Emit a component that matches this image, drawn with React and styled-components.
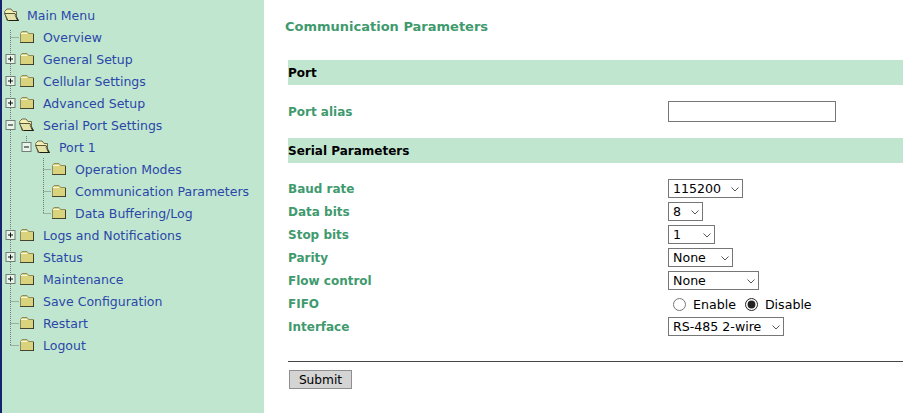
import React from 'react'
import styled, { createGlobalStyle } from 'styled-components'

const GlobalStyle = createGlobalStyle`
    html, body { margin: 0; padding: 0; background: #fff; }
    body { font-family: "DejaVu Sans", Verdana, sans-serif; font-size: 12.5px; }
`

const menu = [
    { label: 'Main Menu', depth: 0, open: true },
    { label: 'Overview', depth: 1 },
    { label: 'General Setup', depth: 1, toggle: 'plus' },
    { label: 'Cellular Settings', depth: 1, toggle: 'plus' },
    { label: 'Advanced Setup', depth: 1, toggle: 'plus' },
    { label: 'Serial Port Settings', depth: 1, toggle: 'minus', open: true },
    { label: 'Port 1', depth: 2, toggle: 'minus', open: true },
    { label: 'Operation Modes', depth: 3 },
    { label: 'Communication Parameters', depth: 3 },
    { label: 'Data Buffering/Log', depth: 3, lastChild: true },
    { label: 'Logs and Notifications', depth: 1, toggle: 'plus' },
    { label: 'Status', depth: 1, toggle: 'plus' },
    { label: 'Maintenance', depth: 1, toggle: 'plus' },
    { label: 'Save Configuration', depth: 1 },
    { label: 'Restart', depth: 1 },
    { label: 'Logout', depth: 1, lastChild: true },
]

const textX = [27, 43, 59, 75]
const folderX = [4, 19, 35, 51]

function Dotted({ x1, y1, x2, y2 }) {
    return <line x1={x1} y1={y1} x2={x2} y2={y2} stroke="#6f7f76" strokeWidth="1" strokeDasharray="1 1" />
}

function Folder({ x, open }) {
    if (open) {
        return (
            <g transform={`translate(${x} 4)`}>
                <path d="M0.5 3.5 L3 1 H7 L9 3.5 H12.5 V12.5 H3 Z" fill="#f4eeb0" stroke="#6b6b4a" />
                <path d="M0.5 5.5 H11 L14.5 12.5 H4 Z" fill="#e6e3a8" stroke="#57573c" />
                <path d="M10 6 L15 13 H5 L4.5 12 H13 Z" fill="#1d1d16" />
            </g>
        )
    }
    return (
        <g transform={`translate(${x} 5)`}>
            <path d="M1.5 2.5 L3 0.5 H8 L9.5 2.5 H14.5 V11.5 H1.5 Z" fill="#d9d47c" stroke="#8f8c62" />
            <path d="M2 2 H8 L9 3 H2 Z" fill="#fbf8d8" />
            <rect x="2" y="3" width="12" height="8" fill="#d8d37c" />
            <path d="M1 12 H15 V3 H14.2 V11.2 H1 Z" fill="#2d2d22" />
        </g>
    )
}

function Toggle({ x, kind }) {
    return (
        <g>
            <rect x={x - 4.5} y="6.5" width="9" height="9" fill="#e8f3ea" stroke="#6f7f76" />
            <line x1={x - 2.5} y1="11" x2={x + 2.5} y2="11" stroke="#111" />
            {kind === 'plus' && <line x1={x} y1="8.5" x2={x} y2="13.5" stroke="#111" />}
        </g>
    )
}

function TreeMark({ item }) {
    const { depth, toggle, open, lastChild, label } = item
    const width = textX[depth]
    const trunkEnd = label === 'Logout' ? 11 : 22
    const nested = depth === 3
    return (
        <TreeSvg width={width} height="22" viewBox={`0 0 ${width} 22`}>
            {depth > 0 && <Dotted x1={10.5} y1={label === 'Overview' ? 4 : 0} x2={10.5} y2={trunkEnd} />}
            {depth === 1 && !toggle && <Dotted x1={10.5} y1={11.5} x2={19} y2={11.5} />}
            {depth === 2 && <Dotted x1={26.5} y1={0} x2={26.5} y2={8} />}
            {nested && <Dotted x1={43.5} y1={0} x2={43.5} y2={lastChild ? 11.5 : 22} />}
            {nested && <Dotted x1={43.5} y1={11.5} x2={51} y2={11.5} />}
            {toggle && <Toggle x={depth === 1 ? 10.5 : 26.5} kind={toggle} />}
            <Folder x={folderX[depth]} open={open} />
        </TreeSvg>
    )
}

function Select({ width, value }) {
    return (
        <PickerBox $w={width}>
            <Picker defaultValue={value}><option>{value}</option></Picker>
            <Chevron width="8" height="5" viewBox="0 0 8 5"><path d="M0.5 0.5 L4 4 L7.5 0.5" fill="none" stroke="#555" /></Chevron>
        </PickerBox>
    )
}

function App() {
    return (
        <Page>
            <GlobalStyle />
            <Sidebar>
                {menu.map((item) => (
                    <MenuRow key={item.label}>
                        <TreeMark item={item} />
                        <MenuLink>{item.label}</MenuLink>
                    </MenuRow>
                ))}
            </Sidebar>
            <Main>
                <Title>Communication Parameters</Title>
                <SectionBar>Port</SectionBar>
                <AliasRow>
                    <FieldLabel>Port alias</FieldLabel>
                    <TextBox type="text" />
                </AliasRow>
                <SectionBar>Serial Parameters</SectionBar>
                <Fields>
                    <FieldRow>
                        <FieldLabel>Baud rate</FieldLabel>
                        <Select width={75} value="115200" />
                    </FieldRow>
                    <FieldRow>
                        <FieldLabel>Data bits</FieldLabel>
                        <Select width={35} value="8" />
                    </FieldRow>
                    <FieldRow>
                        <FieldLabel>Stop bits</FieldLabel>
                        <Select width={47} value="1" />
                    </FieldRow>
                    <FieldRow>
                        <FieldLabel>Parity</FieldLabel>
                        <Select width={65} value="None" />
                    </FieldRow>
                    <FieldRow>
                        <FieldLabel>Flow control</FieldLabel>
                        <Select width={91} value="None" />
                    </FieldRow>
                    <FieldRow>
                        <FieldLabel>FIFO</FieldLabel>
                        <RadioGroup>
                            <RadioLabel><Radio type="radio" name="fifo" />Enable</RadioLabel>
                            <RadioLabel><Radio type="radio" name="fifo" defaultChecked />Disable</RadioLabel>
                        </RadioGroup>
                    </FieldRow>
                    <FieldRow>
                        <FieldLabel>Interface</FieldLabel>
                        <Select width={116} value="RS-485 2-wire" />
                    </FieldRow>
                </Fields>
                <Rule />
                <SubmitButton type="button">Submit</SubmitButton>
            </Main>
        </Page>
    )
}

export default App

const Page = styled.div`
    display: flex;
    width: 903px;
    height: 413px;
    overflow: hidden;
    background: #fff;
`

const Sidebar = styled.nav`
    width: 264px;
    flex: none;
    box-sizing: border-box;
    padding-top: 4px;
    background: #c0e6d0;
    border-left: 2px solid #14246e;
    margin-right: 21px;
`

const MenuRow = styled.div`
    display: flex;
    align-items: center;
    height: 22px;
    margin-left: -2px;
`

const TreeSvg = styled.svg`
    flex: none;
    display: block;
`

const MenuLink = styled.a`
    color: #2a46a8;
    font-size: 12.5px;
    white-space: nowrap;
`

const Main = styled.main`
    flex: 1;
    min-width: 0;
    padding-left: 3px;
`

const Title = styled.h1`
    margin: 18px 0 25px -3px;
    color: #3f9a6e;
    font-size: 13px;
    line-height: 17px;
    font-weight: 700;
`

const SectionBar = styled.div`
    height: 25px;
    line-height: 27px;
    background: #c0e6d0;
    color: #000;
    font-size: 12px;
    font-weight: 700;
`

const AliasRow = styled.div`
    display: flex;
    align-items: center;
    height: 53px;
`

const Fields = styled.div`
    padding-top: 14px;
`

const FieldRow = styled.div`
    display: flex;
    align-items: center;
    height: 23px;
`

const FieldLabel = styled.label`
    width: 380px;
    flex: none;
    color: #3f9a6e;
    font-size: 12px;
    font-weight: 700;
`

const TextBox = styled.input`
    box-sizing: border-box;
    width: 168px;
    height: 21px;
    padding: 1px 2px;
    border: 1px solid #767676;
    background: #fff;
`

const PickerBox = styled.div`
    position: relative;
    width: ${(props) => props.$w}px;
    height: 19px;
`

const Picker = styled.select`
    display: block;
    box-sizing: border-box;
    width: 100%;
    height: 100%;
    padding: 0 0 0 4px;
    appearance: none;
    border: 1px solid #767676;
    border-radius: 0;
    background: #fff;
    color: #000;
    font-family: "DejaVu Sans", Verdana, sans-serif;
    font-size: 12.6px;
`

const Chevron = styled.svg`
    position: absolute;
    right: 4px;
    top: 8px;
    pointer-events: none;
`

const RadioGroup = styled.div`
    display: flex;
    align-items: center;
    gap: 9px;
    padding: 2px 0 0 5px;
`

const RadioLabel = styled.label`
    display: flex;
    align-items: center;
    gap: 7px;
    color: #000;
    font-size: 12.6px;
`

const Radio = styled.input`
    width: 13px;
    height: 13px;
    margin: 0;
    accent-color: #222;
`

const Rule = styled.div`
    height: 1px;
    margin-top: 23px;
    background: #444;
`

const SubmitButton = styled.button`
    display: block;
    box-sizing: border-box;
    width: 63px;
    height: 19px;
    margin: 8px 0 0 1px;
    padding: 0;
    border: 1px solid #8f8f8f;
    background: #d4d4d4;
    color: #000;
    font-family: "DejaVu Sans", Verdana, sans-serif;
    font-size: 12.2px;
`
